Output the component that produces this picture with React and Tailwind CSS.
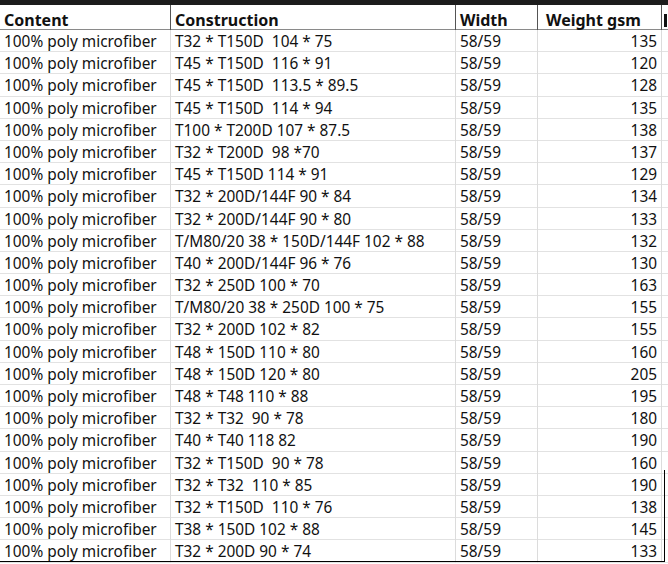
const rows = [
  ['T32 * T150D  104 * 75', '135'],
  ['T45 * T150D  116 * 91', '120'],
  ['T45 * T150D  113.5 * 89.5', '128'],
  ['T45 * T150D  114 * 94', '135'],
  ['T100 * T200D 107 * 87.5', '138'],
  ['T32 * T200D  98 *70', '137'],
  ['T45 * T150D 114 * 91', '129'],
  ['T32 * 200D/144F 90 * 84', '134'],
  ['T32 * 200D/144F 90 * 80', '133'],
  ['T/M80/20 38 * 150D/144F 102 * 88', '132'],
  ['T40 * 200D/144F 96 * 76', '130'],
  ['T32 * 250D 100 * 70', '163'],
  ['T/M80/20 38 * 250D 100 * 75', '155'],
  ['T32 * 200D 102 * 82', '155'],
  ['T48 * 150D 110 * 80', '160'],
  ['T48 * 150D 120 * 80', '205'],
  ['T48 * T48 110 * 88', '195'],
  ['T32 * T32  90 * 78', '180'],
  ['T40 * T40 118 82', '190'],
  ['T32 * T150D  90 * 78', '160'],
  ['T32 * T32  110 * 85', '190'],
  ['T32 * T150D  110 * 76', '138'],
  ['T38 * 150D 102 * 88', '145'],
  ['T32 * 200D 90 * 74', '133'],
];

const cols = 'grid grid-cols-[171px_285px_82px_124px_1fr]';

export default function App() {
  return (
    <div className="relative w-[668px] h-[564px] overflow-hidden bg-white text-[15.4px] text-[#111] font-['Noto_Sans','Liberation_Sans',sans-serif]">
      <div className="h-[5px] bg-[#1c1c1c]" />
      <div className={`${cols} h-[25px] border-b border-[#8a8a8a] font-bold text-[16px]`}>
        <div className="flex items-center pl-1 pt-[3px] border-r border-[#555]">Content</div>
        <div className="flex items-center pl-1 pt-[3px] border-r border-[#555]">Construction</div>
        <div className="flex items-center pl-1 pt-[3px] border-r border-[#555]">Width</div>
        <div className="flex items-center pl-2 pt-[3px] border-r border-[#555]">Weight gsm</div>
        <div className="flex items-center pl-[2px] pt-[3px] overflow-hidden">
          <span className="block w-[3px] h-[13px] bg-[#111]" />
        </div>
      </div>
      {rows.map(([c, w], i) => (
        <div key={i} className={`${cols} h-[22.2px] border-b border-[#e2e2e2]`}>
          <div className="flex items-center pl-1 border-r border-[#dcdcdc] whitespace-nowrap">100% poly microfiber</div>
          <div className="flex items-center pl-1 border-r border-[#dcdcdc] whitespace-pre">{c}</div>
          <div className="flex items-center pl-1 border-r border-[#dcdcdc]">58/59</div>
          <div className="flex items-center justify-end pr-1 border-r border-[#dcdcdc]">{w}</div>
          <div />
        </div>
      ))}
      <div className="absolute left-0 top-[561px] w-[665px] h-[1px] bg-black" />
      <div className="absolute left-[664px] top-[470px] w-[1px] h-[92px] bg-black" />
    </div>
  );
}
